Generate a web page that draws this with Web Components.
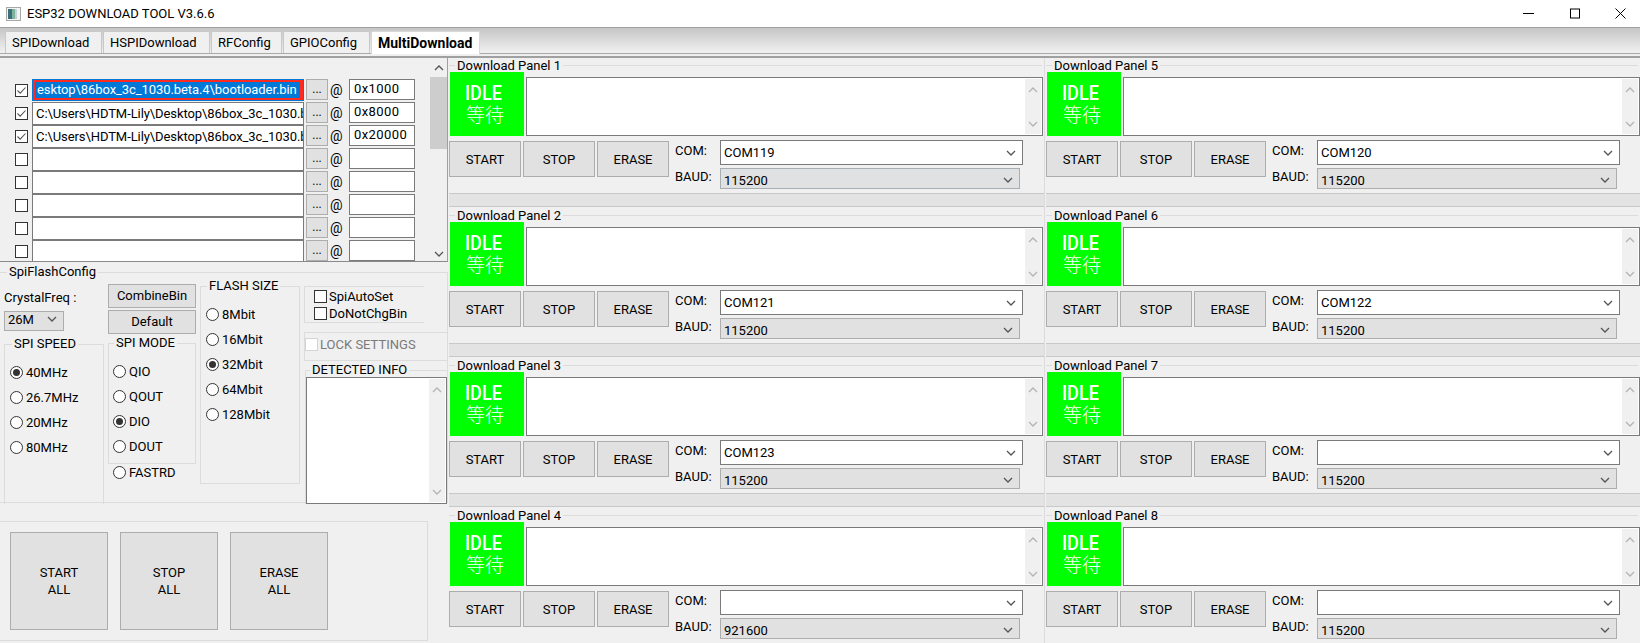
<!DOCTYPE html>
<html lang="en">
<head>
<meta charset="utf-8">
<title>ESP32 DOWNLOAD TOOL</title>
<style>
  html, body { margin: 0; padding: 0; height: 100%; overflow: hidden; background: #f0f0f0; }
  body { font: 13px Roboto, "Noto Sans CJK SC", sans-serif; color: #000; }
</style>
</head>
<body>
<esp-app></esp-app>
<script>
(function () {
  const chevron = (dir, color, size) => {
    const d = dir === 'up' ? 'M1 6 L5 2 L9 6' : 'M1 2 L5 6 L9 2';
    return `<svg width="${size || 10}" height="8" viewBox="0 0 10 8" fill="none" stroke="${color}" stroke-width="1.3"><path d="${d}"/></svg>`;
  };

  class WinTitlebar extends HTMLElement {
    constructor() {
      super();
      this.attachShadow({ mode: 'open' }).innerHTML = `
        <style>
          :host { display: flex; align-items: center; height: 27px; background: #fff; border-bottom: 1px solid #a0a0a0; padding-left: 6px; }
          svg { display: block; flex: none; }
          .name { margin-left: 6px; font-size: 13px; white-space: nowrap; flex: 1; }
          .ctl { display: flex; margin-right: 14px; gap: 35px; align-items: center; }
        </style>
        <svg width="15" height="14" viewBox="0 0 15 14">
          <rect x=".5" y=".5" width="14" height="13" fill="#f4f4f4" stroke="#a8a8a8"/>
          <rect x="2" y="2" width="4" height="10" fill="#3d6f78"/>
          <rect x="6" y="2" width="3" height="10" fill="#7fb29c"/>
          <rect x="9" y="2" width="2" height="10" fill="#c3d3d6"/>
        </svg>
        <span class="name"><slot></slot></span>
        <div class="ctl">
          <svg width="11" height="11" viewBox="0 0 11 11" stroke="#000" fill="none"><path d="M0 5.5H11"/></svg>
          <svg width="11" height="11" viewBox="0 0 11 11" stroke="#000" fill="none"><rect x="1.5" y="1" width="9" height="9"/></svg>
          <svg width="11" height="11" viewBox="0 0 11 11" stroke="#000" fill="none"><path d="M.5 .5L10.5 10.5M10.5 .5L.5 10.5"/></svg>
        </div>`;
    }
  }

  class TabBar extends HTMLElement {
    constructor() {
      super();
      const tabs = (this.getAttribute('tabs') || '').split(',');
      const active = this.getAttribute('active');
      const widths = { SPIDownload: 97, HSPIDownload: 107, RFConfig: 71, GPIOConfig: 87, MultiDownload: 109 };
      this.attachShadow({ mode: 'open' }).innerHTML = `
        <style>
          :host { display: block; height: 29px; box-sizing: border-box; background: linear-gradient(#c6c6c6, #efefef 85%); border-bottom: 1px solid #a0a0a0; position: relative; }
          .strip { display: flex; padding: 3px 0 0 5px; gap: 1px; height: 26px; box-sizing: border-box; border-bottom: 1px solid #a9a9a9; }
          .tab { height: 22px; box-sizing: border-box; background: #f0f0f0; border: 1px solid #c8c8c8; border-bottom: 0; border-radius: 2px 2px 0 0; display: flex; align-items: center; padding-left: 6px; font-size: 13px; }
          .tab.on { background: #fff; font-weight: 700; font-size: 14px; height: 23px; border-color: #d8d8d8; }
          .rest { height: 2px; background: #f0f0f0; }
        </style>
        <div class="strip">${tabs.map(t => `<div class="tab${t === active ? ' on' : ''}" style="width:${widths[t]}px">${t}</div>`).join('')}</div>
        <div class="rest"></div>`;
    }
  }

  class WinButton extends HTMLElement {
    constructor() {
      super();
      this.attachShadow({ mode: 'open' }).innerHTML = `
        <style>
          :host { display: flex; align-items: center; justify-content: center; box-sizing: border-box; background: #e1e1e1; border: 1px solid #adadad; text-align: center; font-size: 13px; flex: none; line-height: 17px; }
        </style><div><slot></slot></div>`;
    }
  }

  class ComboBox extends HTMLElement {
    constructor() {
      super();
      const kind = this.getAttribute('kind') || 'flat';
      const styles = {
        edit: 'background:#fff;border-color:#7a7a7a;',
        flat: 'background:#e1e1e1;border-color:#adadad;',
        hot: 'background:#dfe1e3;border-color:#a6adb3;'
      };
      this.attachShadow({ mode: 'open' }).innerHTML = `
        <style>
          :host { display: flex; align-items: center; box-sizing: border-box; border: 1px solid; padding: 0 6px 0 3px; flex: none; ${styles[kind]} }
          .val { flex: 1; font-size: 13px; white-space: nowrap; }
          svg { display: block; }
        </style><div class="val"><slot></slot></div>${chevron('down', '#555')}`;
    }
  }

  class GroupBox extends HTMLElement {
    constructor() {
      super();
      const title = this.getAttribute('label') || '';
      this.attachShadow({ mode: 'open' }).innerHTML = `
        <style>
          :host { display: block; box-sizing: border-box; border: 1px solid #dcdcdc; position: relative; }
          .title { position: absolute; top: -10px; left: var(--title-left, 7px); background: #f0f0f0; padding: 0 2px; line-height: 18px; font-size: 13px; white-space: nowrap; }
        </style>
        ${title ? `<div class="title">${title}</div>` : ''}
        <slot></slot>`;
    }
  }

  class RadioOpt extends HTMLElement {
    constructor() {
      super();
      const on = this.hasAttribute('checked');
      this.attachShadow({ mode: 'open' }).innerHTML = `
        <style>
          :host { display: flex; align-items: center; height: 25px; gap: 3px; font-size: 13px; white-space: nowrap; }
          svg { display: block; flex: none; }
        </style>
        <svg width="13" height="13" viewBox="0 0 13 13">
          <circle cx="6.5" cy="6.5" r="6" fill="#fff" stroke="#333"/>
          ${on ? '<circle cx="6.5" cy="6.5" r="3.5" fill="#333"/>' : ''}
        </svg><span><slot></slot></span>`;
    }
  }

  class CheckOpt extends HTMLElement {
    constructor() {
      super();
      const on = this.hasAttribute('checked');
      const off = this.hasAttribute('disabled');
      this.attachShadow({ mode: 'open' }).innerHTML = `
        <style>
          :host { display: flex; align-items: center; gap: 2px; font-size: 13px; white-space: nowrap; ${off ? 'color:#7a7a7a;' : ''} }
          svg { display: block; flex: none; }
        </style>
        <svg width="13" height="13" viewBox="0 0 13 13">
          <rect x=".5" y=".5" width="12" height="12" fill="#fff" stroke="${off ? '#d4d4d4' : '#333'}"/>
          ${on ? '<path d="M2.5 6.5L5.2 9.2L10.5 3.5" fill="none" stroke="#555" stroke-width="1.1"/>' : ''}
        </svg><span><slot></slot></span>`;
    }
  }

  class LogArea extends HTMLElement {
    constructor() {
      super();
      this.attachShadow({ mode: 'open' }).innerHTML = `
        <style>
          :host { display: flex; box-sizing: border-box; background: #fff; border: 1px solid #7a7a7a; justify-content: flex-end; padding: 1px; }
          .bar { width: 16px; background: #f0f0f0; display: flex; flex-direction: column; align-items: center; justify-content: space-between; padding: 7px 0 6px; box-sizing: border-box; }
        </style>
        <div class="bar">${chevron('up', '#b4b4b4')}${chevron('down', '#b4b4b4')}</div>`;
    }
  }

  class FileRow extends HTMLElement {
    constructor() {
      super();
      const on = this.hasAttribute('checked');
      const selected = this.hasAttribute('selected');
      const path = this.getAttribute('path') || '';
      const addr = this.getAttribute('addr') || '';
      this.attachShadow({ mode: 'open' }).innerHTML = `
        <style>
          :host { display: flex; height: 23px; align-items: flex-start; font-size: 13px; flex: none; }
          check-opt { margin: 5px 2px 0 15px; }
          .path { width: 272px; height: 23px; box-sizing: border-box; background: #fff; border: 1px solid #7a7a7a; padding: 0 0 0 3px; line-height: 21px; letter-spacing: -.08px; overflow: hidden; white-space: nowrap; flex: none; }
          .path.sel { height: 22px; border: 1px solid #0078d7; padding: 0; background: #ff2a20; position: relative; }
          .path.sel span { display: block; margin: 2px 3px 2px 2px; background: #0078d7; color: #fff; height: 16px; line-height: 15px; padding-left: 2px; overflow: hidden; box-sizing: border-box; }
          win-button { width: 22px; height: 21px; margin-left: 2px; font-size: 12px; }
          .at { width: 21px; padding-left: 2px; box-sizing: border-box; margin-top: 1px; line-height: 20px; font-size: 14px; }
          .addr { width: 66px; height: 21px; box-sizing: border-box; background: #fff; border: 1px solid #7a7a7a; padding-left: 4px; line-height: 18px; letter-spacing: .4px; }
        </style>
        <check-opt ${on ? 'checked' : ''}></check-opt>
        <div class="path${selected ? ' sel' : ''}"><span>${path}</span></div>
        <win-button>...</win-button>
        <div class="at">@</div>
        <div class="addr">${addr}</div>`;
    }
  }

  class FileList extends HTMLElement {
    constructor() {
      super();
      this.attachShadow({ mode: 'open' }).innerHTML = `
        <style>
          :host { display: flex; height: 204px; box-sizing: border-box; border-bottom: 1px solid #8a8a8a; border-right: 1px solid #a0a0a0; overflow: hidden; }
          .rows { flex: 1; padding-top: 21px; display: flex; flex-direction: column; min-width: 0; }
          .bar { width: 17px; background: #f0f0f0; display: flex; flex-direction: column; align-items: center; padding-top: 6px; box-sizing: border-box; }
          .thumb { width: 100%; height: 72px; background: #cdcdcd; margin-top: 5px; flex: none; }
          .sp { flex: 1; }
          .bar svg { flex: none; }
          .bar svg:last-child { margin-bottom: 3px; }
        </style>
        <div class="rows"><slot></slot></div>
        <div class="bar">${chevron('up', '#555')}<div class="thumb"></div><div class="sp"></div>${chevron('down', '#555')}</div>`;
    }
  }

  class SpiConfig extends HTMLElement {
    constructor() {
      super();
      this.attachShadow({ mode: 'open' }).innerHTML = `
        <style>
          :host { display: block; height: 259px; box-sizing: border-box; padding-top: 10px; }
          .outer { height: 231px; display: block; border-left: 0; border-bottom: 1px solid #dcdcdc; padding-left: 4px; }
          .cols { display: grid; grid-template-columns: 100px 88px 100px 144px; column-gap: 4px; height: 100%; }
          .col { display: flex; flex-direction: column; min-width: 0; }
          .lbl { margin-top: 16px; line-height: 18px; font-size: 13px; }
          .cf { width: 60px; height: 20px; margin-top: 4px; padding-bottom: 4px; }
          .speed { margin-top: 13px; flex: 1; padding-top: 15px; padding-left: 5px; border-bottom: 0; }
          .b1 { width: 88px; height: 24px; margin-top: 11px; padding-bottom: 2px; }
          .b2 { width: 88px; height: 24px; margin-top: 2px; padding-bottom: 2px; }
          .mode { --title-left: 5px; margin-top: 9px; height: 121px; padding: 15px 0 0 4px; }
          .fast { margin: -4px 0 0 5px; }
          .flash { --title-left: 6px; margin-top: 13px; height: 198px; padding: 15px 0 0 5px; }
          .chk { margin-top: 13px; height: 37px; padding: 1px 0 0 9px; border-right: 0; width: 120px; }
          .chk check-opt { height: 17px; }
          .lock { margin-top: 9px; height: 29px; padding: 0 0 5px; display: flex; align-items: center; }
          .det { --title-left: 4px; margin-top: 9px; margin-left: 1px; flex: 1; padding-top: 6px; border-bottom: 0; border-right: 0; }
          .det log-area { height: 127px; margin: 0 1px 0 0; width: 141px; position: relative; }
        </style>
        <group-box class="outer" label="SpiFlashConfig">
          <div class="cols">
            <div class="col">
              <div class="lbl">CrystalFreq :</div>
              <combo-box class="cf" kind="flat">26M</combo-box>
              <group-box class="speed" label="SPI SPEED">
                <radio-opt checked>40MHz</radio-opt><radio-opt>26.7MHz</radio-opt><radio-opt>20MHz</radio-opt><radio-opt>80MHz</radio-opt>
              </group-box>
            </div>
            <div class="col">
              <win-button class="b1">CombineBin</win-button>
              <win-button class="b2">Default</win-button>
              <group-box class="mode" label="SPI MODE">
                <radio-opt>QIO</radio-opt><radio-opt>QOUT</radio-opt><radio-opt checked>DIO</radio-opt><radio-opt>DOUT</radio-opt>
              </group-box>
              <radio-opt class="fast">FASTRD</radio-opt>
            </div>
            <div class="col">
              <group-box class="flash" label="FLASH SIZE">
                <radio-opt>8Mbit</radio-opt><radio-opt>16Mbit</radio-opt><radio-opt checked>32Mbit</radio-opt><radio-opt>64Mbit</radio-opt><radio-opt>128Mbit</radio-opt>
              </group-box>
            </div>
            <div class="col">
              <group-box class="chk">
                <check-opt>SpiAutoSet</check-opt><check-opt>DoNotChgBin</check-opt>
              </group-box>
              <group-box class="lock"><check-opt disabled>LOCK SETTINGS</check-opt></group-box>
              <group-box class="det" label="DETECTED INFO"><log-area></log-area></group-box>
            </div>
          </div>
        </group-box>
        `;
    }
  }

  class AllControls extends HTMLElement {
    constructor() {
      super();
      this.attachShadow({ mode: 'open' }).innerHTML = `
        <style>
          :host { display: flex; gap: 12px; width: 428px; height: 120px; box-sizing: border-box; border: 1px solid #dcdcdc; border-left: 0; padding: 10px 0 0 10px; }
          win-button { width: 98px; height: 98px; }
        </style>
        <win-button>START<br>ALL</win-button>
        <win-button>STOP<br>ALL</win-button>
        <win-button>ERASE<br>ALL</win-button>`;
    }
  }

  class DownloadPanel extends HTMLElement {
    constructor() {
      super();
      const n = this.getAttribute('num');
      const com = this.getAttribute('com') || '';
      const baud = this.getAttribute('baud') || '115200';
      const wide = this.hasAttribute('wide');
      const baudKind = this.getAttribute('baud-kind') || 'flat';
      this.attachShadow({ mode: 'open' }).innerHTML = `
        <style>
          :host { display: block; height: 150px; box-sizing: border-box; padding-left: 1px; ${wide ? '' : 'border-right: 1px solid #dcdcdc;'} }
          .head { height: 14px; position: relative; }
          .line { position: absolute; left: 0; right: 2px; top: 7px; border-top: 1px solid #dcdcdc; }
          .title { position: absolute; left: 6px; top: 1px; background: #f0f0f0; padding: 0 2px; line-height: 13px; font-size: 13px; white-space: nowrap; }
          .top { display: flex; height: 64px; padding-left: 1px; }
          .idle { width: 74px; height: 64px; background: #00ff00; color: #fff; display: flex; flex-direction: column; align-items: center; justify-content: center; flex: none; padding-right: 4px; box-sizing: border-box; }
          .idle b { display: block; font-size: 21px; font-weight: 500; line-height: 19px; transform: scaleX(.86); margin-right: 3px; }
          .idle span { font-size: 19px; font-weight: 300; line-height: 21px; font-family: "Noto Sans CJK SC", sans-serif; }
          log-area { margin: 5px 2px 0 2px; flex: 1; height: 59px; ${wide ? 'margin-right: 0;' : 'margin-right: 1px;'} }
          .bot { display: flex; height: 57px; padding-top: 4px; box-sizing: border-box; }
          .btns { display: flex; gap: 2px; padding-top: 1px; }
          .btns win-button { width: 72px; height: 36px; }
          .labels { width: 45px; margin-left: 6px; line-height: 18px; }
          .labels div:first-child { margin-top: 2px; }
          .labels div:last-child { margin-top: 8px; }
          .combos { display: flex; flex-direction: column; gap: 3px; }
          .c1 { width: 303px; height: 25px; }
          .c2 { width: 300px; height: 21px; padding-top: 3px; }
          .gap { height: 14px; box-sizing: border-box; background: #e3e3e3; border-top: 1px solid #c8c8c8; border-bottom: 1px solid #c8c8c8; }
        </style>
        <div class="head"><div class="line"></div><div class="title">Download Panel ${n}</div></div>
        <div class="top">
          <div class="idle"><b>IDLE</b><span>等待</span></div>
          <log-area></log-area>
        </div>
        <div class="bot">
          <div class="btns"><win-button>START</win-button><win-button>STOP</win-button><win-button>ERASE</win-button></div>
          <div class="labels"><div>COM:</div><div>BAUD:</div></div>
          <div class="combos">
            <combo-box class="c1" kind="edit">${com}</combo-box>
            <combo-box class="c2" kind="${baudKind}">${baud}</combo-box>
          </div>
        </div>
        <div class="gap"></div>`;
    }
  }

  class EspApp extends HTMLElement {
    constructor() {
      super();
      const coms = { 1: 'COM119', 2: 'COM121', 3: 'COM123', 4: '', 5: 'COM120', 6: 'COM122', 7: '', 8: '' };
      const panels = [1, 2, 3, 4, 5, 6, 7, 8].map(n => `<download-panel num="${n}" com="${coms[n]}" ${n === 4 ? 'baud="921600"' : ''} ${n === 1 ? 'baud-kind="hot"' : ''} ${n > 4 ? 'wide' : ''}></download-panel>`).join('');
      const shown = 'C:\\Users\\HDTM-Lily\\Desktop\\86box_3c_1030.b';
      this.attachShadow({ mode: 'open' }).innerHTML = `
        <style>
          :host { display: block; width: 1640px; height: 643px; overflow: hidden; background: #f0f0f0; }
          .main { display: grid; grid-template-columns: 448px 1fr; border-top: 1px solid #a0a0a0; height: 586px; }
          .left { display: flex; flex-direction: column; min-width: 0; }
          .right { display: grid; grid-template-columns: 597px 595px; grid-template-rows: repeat(4, 150px); grid-auto-flow: column; }
        </style>
        <win-titlebar>ESP32 DOWNLOAD TOOL V3.6.6</win-titlebar>
        <tab-bar tabs="SPIDownload,HSPIDownload,RFConfig,GPIOConfig,MultiDownload" active="MultiDownload"></tab-bar>
        <div class="main">
          <div class="left">
            <file-list>
              <file-row checked selected path="esktop\\86box_3c_1030.beta.4\\bootloader.bin" addr="0x1000"></file-row>
              <file-row checked path="${shown}" addr="0x8000"></file-row>
              <file-row checked path="${shown}" addr="0x20000"></file-row>
              <file-row></file-row><file-row></file-row><file-row></file-row><file-row></file-row><file-row></file-row>
            </file-list>
            <spi-config></spi-config>
            <all-controls></all-controls>
          </div>
          <div class="right">${panels}</div>
        </div>`;
    }
  }

  const defs = {
    'win-titlebar': WinTitlebar, 'tab-bar': TabBar, 'win-button': WinButton, 'combo-box': ComboBox,
    'group-box': GroupBox, 'radio-opt': RadioOpt, 'check-opt': CheckOpt, 'log-area': LogArea,
    'file-row': FileRow, 'file-list': FileList, 'spi-config': SpiConfig, 'all-controls': AllControls,
    'download-panel': DownloadPanel, 'esp-app': EspApp
  };
  Object.keys(defs).forEach(name => customElements.define(name, defs[name]));
})();
</script>
</body>
</html>
